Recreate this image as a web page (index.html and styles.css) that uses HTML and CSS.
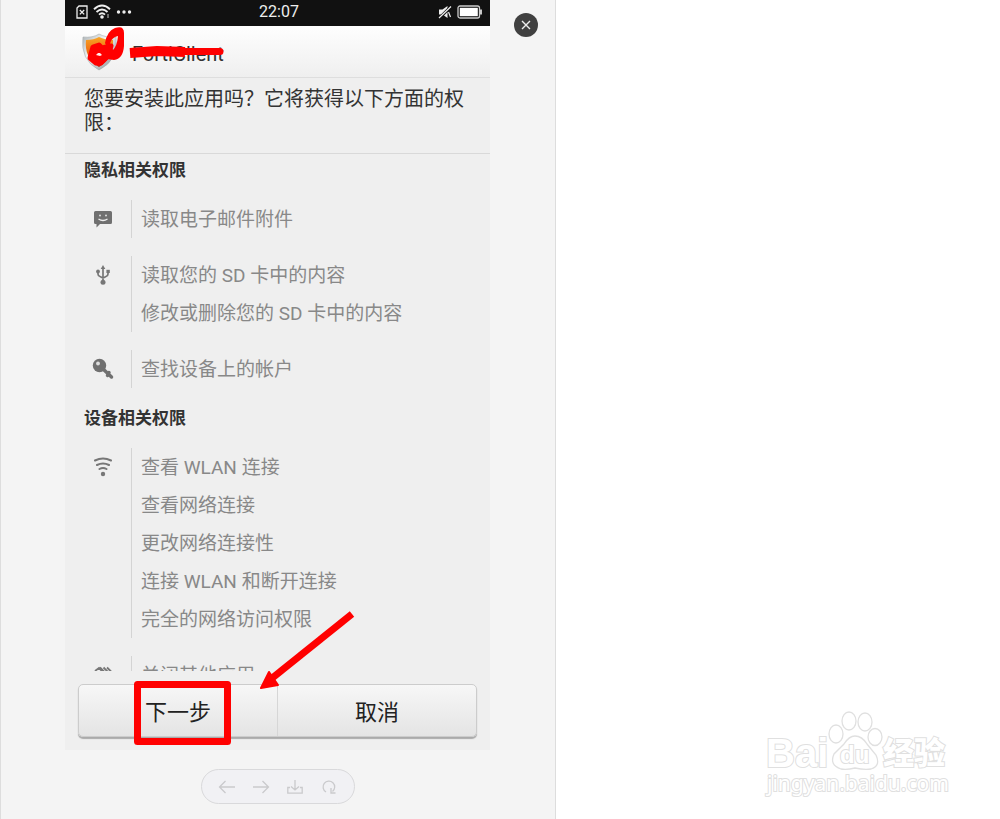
FILE: index.html
```html
<!DOCTYPE html>
<html lang="zh-CN">
<head>
<meta charset="utf-8">
<meta name="viewport" content="width=device-width, initial-scale=1">
<title>安装应用</title>
<link rel="stylesheet" href="styles.css">
</head>
<body>
<div class="page">
  <main class="viewer">
    <section class="phone">
      <div class="status">
        <div class="status-left">
          <svg width="12" height="14" viewBox="0 0 12 14" fill="none" stroke="#eee" stroke-width="1.3"><path d="M3 1h8v12H1V3z"/><path d="M3.800 5l4.400 4.400M8.200 5L3.800 9.400"/></svg>
          <svg width="18" height="15" viewBox="0 0 18 15" fill="none" stroke="#eee" stroke-width="1.900"><path d="M1 5.200Q9-2 17 5.200M3.500 8Q9 3 14.500 8M6 10.600Q9 8 12 10.600"/><circle cx="9" cy="13" r="1.800" fill="#eee" stroke="none"/><path d="M15 10v4" stroke="#888" stroke-width="1.500"/></svg>
          <svg width="16" height="4" viewBox="0 0 16 4" fill="#eee"><circle cx="2.500" cy="2" r="1.700"/><circle cx="8" cy="2" r="1.700"/><circle cx="13.500" cy="2" r="1.700"/></svg>
        </div>
        <time class="clock">22:07</time>
        <div class="status-right">
          <svg width="14" height="14" viewBox="0 0 14 14"><path d="M1 4.500h3.500L9.500 1v12L4.500 9.500H1z" fill="#eee"/><path d="M1 13.500L13.500 1" stroke="#111" stroke-width="3"/><path d="M1 13L13 1.500M10.500 7l2 5" stroke="#eee" stroke-width="1.200"/></svg>
          <svg width="25" height="14" viewBox="0 0 25 14"><rect x="1" y="1" width="21.500" height="12" rx="2" fill="none" stroke="#ccc" stroke-width="1.300"/><rect x="2.800" y="2.800" width="18" height="8.400" fill="#fff"/><path d="M24 4.500v5" stroke="#ddd" stroke-width="1.800"/></svg>
        </div>
      </div>
      <header class="app-bar">
        <svg class="app-icon" width="36" height="38" viewBox="0 0 36 38">
          <defs>
            <linearGradient id="rim" x2="1" y2="1"><stop stop-color="#a9b0b4"/><stop offset=".4" stop-color="#f5f6f6"/><stop offset="1" stop-color="#7d878c"/></linearGradient>
            <linearGradient id="shield" x2="0" y2="1"><stop stop-color="#f7a526"/><stop offset=".5" stop-color="#f06a12"/><stop offset="1" stop-color="#c8160c"/></linearGradient>
          </defs>
          <path d="M1 4Q11 5 17 1Q24 5 34 4Q37 27 17 37Q-2 27 1 4z" fill="url(#rim)" stroke="#a5abad" stroke-width=".6"/>
          <path d="M4 7Q12 7 17 4Q23 7 31 7Q32 25 17 34Q2 25 4 7z" fill="url(#shield)"/>
        </svg>
        <h1 class="app-name">FortiClient</h1>
      </header>
      <p class="question">您要安装此应用吗？它将获得以下方面的权限：</p>
      <div class="permissions">
        <h2 class="heading">隐私相关权限</h2>
        <div class="group">
          <span class="icon"><svg width="20" height="18" viewBox="0 0 20 18"><path d="M2.500 1h15Q19 1 19 2.500v10Q19 14 17.500 14H7l-3.500 3.500V14h-1Q1 14 1 12.500v-10Q1 1 2.500 1z" fill="#707070"/><path d="M5.500 9Q10 12 14.500 9" fill="none" stroke="#eee" stroke-width="1.300"/><circle cx="7" cy="5.500" r="1" fill="#ddd"/><circle cx="13" cy="5.500" r="1" fill="#ddd"/></svg></span>
          <ul class="items"><li>读取电子邮件附件</li></ul>
        </div>
        <div class="group">
          <span class="icon"><svg width="14" height="20" viewBox="0 0 14 20"><g fill="none" stroke="#777" stroke-width="1.700"><path d="M7 3v13M2 6.500v2.500q0 2 2 2.500L7 13l3-1.500Q12 11 12 9V6.500"/></g><path d="M7 0l2.300 4H4.700z" fill="#777"/><circle cx="7" cy="17.300" r="2.500" fill="#777"/><circle cx="2" cy="6.500" r="1.900" fill="#777"/><path d="M10.400 4.800h3.400V8h-3.400z" fill="#777"/></svg></span>
          <ul class="items"><li>读取您的 SD 卡中的内容</li><li>修改或删除您的 SD 卡中的内容</li></ul>
        </div>
        <div class="group">
          <span class="icon"><svg width="22" height="22" viewBox="0 0 22 22"><path d="M10 10l9.500 9M15.500 17.500l1.500-3" fill="none" stroke="#707070" stroke-width="3.500" stroke-linecap="round"/><circle cx="7.500" cy="7.500" r="6.700" fill="#707070"/><circle cx="6" cy="5.500" r="1.900" fill="#ddd"/></svg></span>
          <ul class="items"><li>查找设备上的帐户</li></ul>
        </div>
        <h2 class="heading">设备相关权限</h2>
        <div class="group">
          <span class="icon"><svg width="20" height="20" viewBox="0 0 20 20" fill="none" stroke="#777" stroke-width="2" stroke-linecap="round"><path d="M2 3.500Q10-.5 18 3.500M4 8Q10 4.800 16 8M6.500 12Q10 10 13.500 12"/><circle cx="10" cy="17" r="2.200" fill="#777" stroke="none"/></svg></span>
          <ul class="items"><li>查看 WLAN 连接</li><li>查看网络连接</li><li>更改网络连接性</li><li>连接 WLAN 和断开连接</li><li>完全的网络访问权限</li></ul>
        </div>
        <div class="group">
          <span class="icon"><svg width="18" height="18" viewBox="0 0 18 18" fill="none" stroke="#777" stroke-width="1.800"><path d="M1 5l4-3 12 13M6 1.500l11 11M9.500 1.500l7 7M13 1.500l4 4M1 5v10h12"/></svg></span>
          <ul class="items"><li>关闭其他应用</li></ul>
        </div>
      </div>
      <div class="actions">
        <button class="action" type="button">下一步</button>
        <button class="action" type="button">取消</button>
      </div>
      <svg class="marks" viewBox="0 0 425 750" fill="none" stroke="#f00" stroke-linecap="round" stroke-linejoin="round" aria-hidden="true">
        <path d="M65 53L92 51L120 52" stroke-width="10" stroke-linecap="butt"/>
        <path d="M94 51.500H155" stroke-width="7"/>
        <path d="M28 47L25 58L31 63H36L43 56L46 46L37 48L34 45z" fill="#f00" stroke-width="5"/>
        <path fill="#f00" fill-rule="evenodd" stroke="none" d="M40 43Q42 31 50 28Q59 25 59 33V46Q58 59 49 60L42 59L43 49zM50 37Q46 39 45 44L48 50Q52 46 53 36z"/>
        <path d="M31 55l2-2h2l2 2-2 1z" fill="#fee" stroke="none"/>
        <rect x="72.500" y="684.500" width="90" height="57" stroke-width="7"/>
        <path d="M287 614L206 679" stroke-width="7" stroke-linecap="butt"/>
        <path d="M196 688L204 672L213 685z" fill="#f00" stroke-width="2"/>
      </svg>
    </section>
    <div class="side">
      <button class="close" type="button" aria-label="关闭"><svg width="10" height="10" viewBox="0 0 10 10" stroke="#eee" stroke-width="1.400"><path d="M1 1l8 8M9 1L1 9"/></svg></button>
    </div>
    <nav class="toolbar" aria-label="图片工具">
      <button class="tool" type="button" aria-label="上一张"><svg width="18" height="16" viewBox="0 0 18 16"><path d="M17 8H1.500M7.500 2L1.500 8l6 6"/></svg></button>
      <button class="tool" type="button" aria-label="下一张"><svg width="18" height="16" viewBox="0 0 18 16"><path d="M1 8h15.500M10.500 2l6 6-6 6"/></svg></button>
      <button class="tool" type="button" aria-label="下载"><svg width="18" height="16" viewBox="0 0 18 16"><path d="M9 1v10M5 7.500L9 11l4-3.500M4 8.500H1.800v5.700h14.400V8.500H14"/></svg></button>
      <button class="tool" type="button" aria-label="旋转"><svg width="18" height="16" viewBox="0 0 18 16"><path d="M6 13A5.800 5.800 0 1 1 12.500 12.500M11 9v5h4.500"/></svg></button>
    </nav>
  </main>
  <aside class="rest">
    <svg class="watermark" width="190" height="94" viewBox="0 0 190 94" role="img" aria-label="Baidu 经验">
      <g fill="#fff" stroke="#e0e0e0" stroke-width="1.300">
        <ellipse cx="76" cy="30" rx="7" ry="9"/><ellipse cx="89" cy="17" rx="7" ry="9"/><ellipse cx="105" cy="18" rx="7" ry="9"/><ellipse cx="115" cy="33" rx="7" ry="8.500"/>
        <path d="M95 32Q102 32 107 40L116 51Q121 62 111 65Q104 66 95 64Q87 66 81 65Q69 61 74 50L84 40Q89 32 95 32z"/>
        <text class="wm-bai" x="6" y="63">Bai</text>
        <text class="wm-du" x="80" y="59">du</text>
        <text class="wm-cn" x="123" y="60">经验</text>
        <text class="wm-url" x="7" y="87">jingyan.baidu.com</text>
      </g>
    </svg>
  </aside>
</div>
</body>
</html>
```

FILE: styles.css
```css
* {
  box-sizing: border-box;
}

body {
  margin: 0;
  background: #fff;
  color: #333;
  font-family: Roboto, "Noto Sans CJK SC", sans-serif;
}

button {
  padding: 0;
  border: 0;
  background: none;
  color: inherit;
  font: inherit;
  cursor: pointer;
}

svg {
  display: block;
}

.page {
  display: flex;
  min-height: 100vh;
}

.viewer {
  display: grid;
  grid-template-columns: 64px 1fr 65px;
  grid-template-rows: auto 1fr;
  width: 55.6%;
  border: solid #ddd;
  border-width: 0 1px;
  background: #f4f4f4;
}

.phone {
  position: relative;
  grid-column: 2;
  padding-bottom: 13px;
  background: #efefef;
}

.status {
  display: grid;
  grid-template-columns: 1fr auto 1fr;
  align-items: center;
  height: 26px;
  padding: 0 8px 3px 11px;
  background: #111;
  color: #eee;
}

.status-left,
.status-right {
  display: flex;
  align-items: center;
  gap: 5px;
}

.status-right {
  justify-content: flex-end;
}

.clock {
  font-size: 16px;
  line-height: 20px;
}

.app-bar {
  display: flex;
  align-items: center;
  gap: 14px;
  height: 52px;
  padding: 0 17px;
  border-bottom: 1px solid #dedede;
  background: linear-gradient(#fefefe, #efefef);
}

.app-name {
  margin: 0;
  padding-top: 4px;
  font-size: 20px;
  font-weight: 400;
}

.question {
  margin: 0;
  height: 76px;
  padding: 9px 19px;
  border-bottom: 1px solid #d9d9d9;
  font-size: 20px;
  line-height: 24px;
}

.permissions {
  display: flex;
  flex-direction: column;
  gap: 18px;
  height: 517px;
  padding: 4px 19px 0;
  overflow: hidden;
}

.heading {
  flex: none;
  margin: 0;
  font-size: 17px;
  font-weight: 700;
  line-height: 24px;
}

.group {
  display: flex;
  flex: none;
}

.icon {
  display: grid;
  place-items: center;
  width: 38px;
  height: 38px;
}

.items {
  flex: 1;
  margin: 0 0 0 9px;
  padding: 0 0 0 9px;
  border-left: 1px solid #d4d4d4;
  color: #888;
  font-size: 19px;
  line-height: 36px;
  list-style: none;
}

.items li {
  padding-top: 2px;
}

.actions {
  display: flex;
  margin: 13px 13px 0;
  border: 1px solid #ccc;
  border-radius: 5px;
  background: linear-gradient(#f7f7f7, #e4e4e4);
  box-shadow: 0 2px 1px #aaa;
}

.action {
  flex: 1;
  height: 51px;
  padding-bottom: 2px;
  color: #222;
  font-size: 22px;
}

.action + .action {
  border-left: 1px solid #d6d6d6;
}

.marks {
  position: absolute;
  inset: 0;
  width: 100%;
  height: 100%;
  pointer-events: none;
}

.side {
  padding: 13px 0 0 24px;
}

.close {
  display: grid;
  place-items: center;
  width: 24px;
  height: 24px;
  border-radius: 50%;
  background: #404040;
}

.toolbar {
  display: flex;
  grid-column: 2;
  align-self: start;
  justify-self: center;
  align-items: center;
  gap: 16px;
  height: 35px;
  margin-top: 19px;
  padding: 0 16px;
  border: 1px solid #d9d9db;
  border-radius: 18px;
  background: #f1f1f4;
}

.tool svg {
  fill: none;
  stroke: #cacacc;
  stroke-width: 1.3;
}

.rest {
  display: flex;
  flex: 1;
  align-items: flex-end;
  justify-content: flex-end;
  padding: 0 50px 21px 0;
}

.watermark text {
  paint-order: stroke;
  stroke-width: 2;
}

.wm-bai {
  font: 700 40px "Liberation Sans", sans-serif;
}

.wm-du {
  font: 700 24px "Liberation Sans", sans-serif;
}

.wm-cn {
  font: 900 31px "Noto Sans CJK SC", sans-serif;
}

.wm-url {
  font: 400 21px "Noto Sans", sans-serif;
}
```
